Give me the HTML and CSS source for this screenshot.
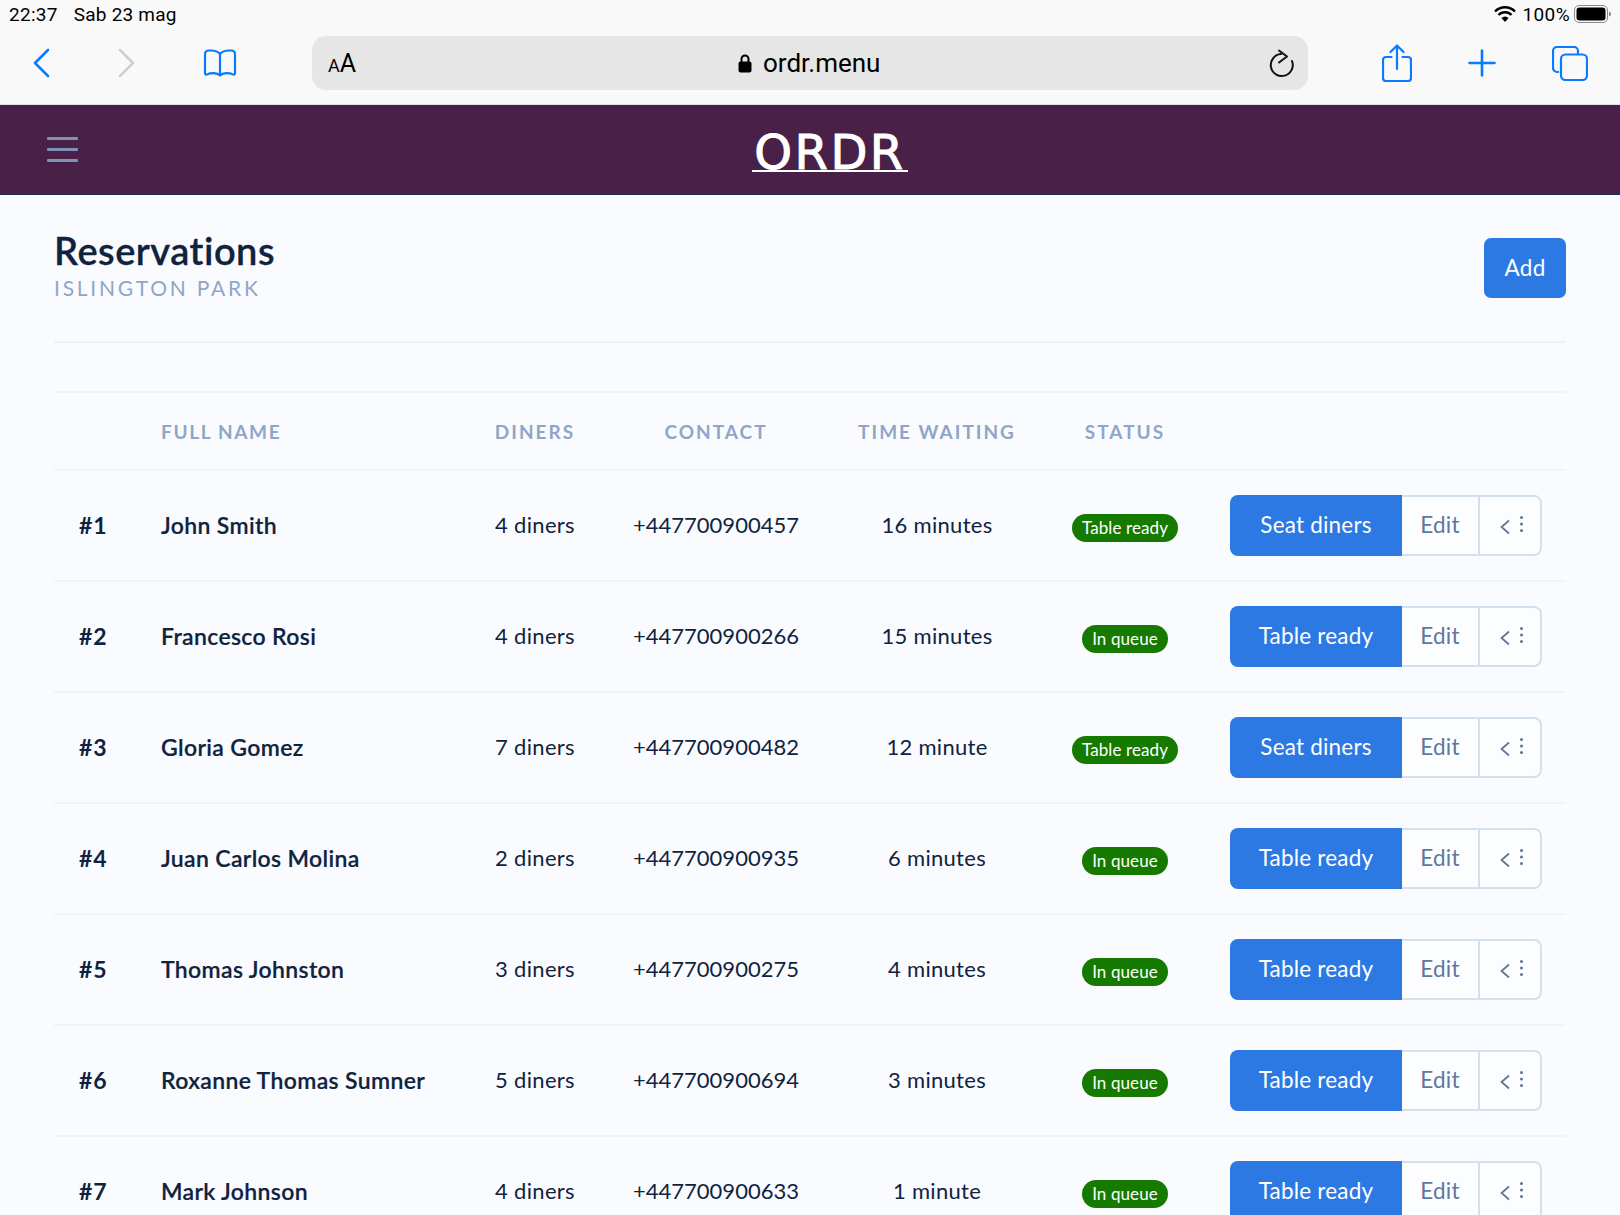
FILE: index.html
```html
<!DOCTYPE html>
<html lang="en">
<head>
<meta charset="utf-8">
<title>Reservations</title>
<link rel="stylesheet" href="styles.css">
</head>
<body>
<svg class="defs" width="0" height="0"><symbol id="more" viewBox="-1.500 0 30 22"><path d="M12.500 7.500l-7.500 6.500 7.500 6.500" fill="none" stroke="#5d7396" stroke-width="1.700"/><circle cx="25" cy="4.500" r="1.500" fill="#5d7396"/><circle cx="25" cy="11" r="1.500" fill="#5d7396"/><circle cx="25" cy="17.500" r="1.500" fill="#5d7396"/></symbol></svg>
<div class="chrome">
  <div class="status">
    <span class="clock">22:37</span><span class="date">Sab 23 mag</span>
    <span class="spring"></span>
    <svg class="wifi" width="22" height="16" viewBox="0 0 22 16"><path d="M1 5.500a14 14 0 0 1 20 0M4.500 9a9 9 0 0 1 13 0" fill="none" stroke="#000" stroke-width="2.400"/><path d="M11 16l-3.600-4a5.400 5.400 0 0 1 7.200 0z"/></svg>
    <span class="pct">100%</span>
    <svg class="batt" width="38" height="18" viewBox="0 0 38 18"><rect x=".5" y=".5" width="33" height="17" rx="4.500" fill="none" stroke="#8a8a8a"/><rect x="2.500" y="2.500" width="29" height="13" rx="3"/><path d="M35 6.500c1.500.4 2 1.300 2 2.500s-.5 2.100-2 2.500z" fill="#8a8a8a"/></svg>
  </div>
  <div class="toolbar">
    <svg class="ic back" width="18" height="30" viewBox="0 0 18 30"><path d="M16 2L3 15l13 13" fill="none" stroke="#0a7aff" stroke-width="2.600" stroke-linecap="round" stroke-linejoin="round"/></svg>
    <svg class="ic fwd" width="18" height="30" viewBox="0 0 18 30"><path d="M2 2l13 13L2 28" fill="none" stroke="#cfcfcf" stroke-width="2.600" stroke-linecap="round" stroke-linejoin="round"/></svg>
    <svg class="ic book" width="36" height="30" viewBox="0 0 36 30"><path d="M18 6C16 3.500 13 2.500 9 2.500H7C4.500 2.500 3 4 3 6.500V25c0 1.500 1 2 2.500 1.300C9 24.500 15 24.700 18 27.500c3-2.800 9-3 12.500-1.200 1.500.7 2.500.2 2.500-1.300V6.500C33 4 31.500 2.500 29 2.500h-2C23 2.500 20 3.500 18 6zM18 6v21" fill="none" stroke="#0a7aff" stroke-width="2.200" stroke-linejoin="round"/></svg>
    <div class="address">
      <span class="aa"><small>A</small>A</span>
      <span class="url"><svg class="lock" width="14" height="19" viewBox="0 0 14 19"><path d="M3.500 8V5a3.500 3.500 0 0 1 7 0v3" fill="none" stroke="#000" stroke-width="2"/><rect x="0.500" y="7.500" width="13" height="11" rx="2"/></svg>ordr.menu</span>
      <svg class="reload" width="26" height="30" viewBox="0 0 26 30"><path d="M12 6.100A11 11 0 1 0 23 13" fill="none" stroke="#111" stroke-width="2" stroke-linecap="round"/><path d="M10 2.500l8 6-8 6" fill="none" stroke="#111" stroke-width="2" stroke-linecap="round" stroke-linejoin="round"/></svg>
    </div>
    <svg class="ic share" width="30" height="38" viewBox="0 0 30 38"><path d="M9.500 13H4a3 3 0 0 0-3 3v18a3 3 0 0 0 3 3h22a3 3 0 0 0 3-3V16a3 3 0 0 0-3-3h-5.500M15 25V2M8.500 8L15 1.500 21.500 8" fill="none" stroke="#0a7aff" stroke-width="2.200" stroke-linecap="round" stroke-linejoin="round"/></svg>
    <svg class="ic plus" width="28" height="28" viewBox="0 0 28 28"><path d="M14 1.500v25M1.500 14h25" fill="none" stroke="#0a7aff" stroke-width="2.600" stroke-linecap="round"/></svg>
    <svg class="ic tabs" width="36" height="35" viewBox="0 0 36 35"><path d="M7 26H5a4 4 0 0 1-4-4V5a4 4 0 0 1 4-4h17a4 4 0 0 1 4 4v3" fill="none" stroke="#0a7aff" stroke-width="2.200"/><rect x="9" y="8.500" width="26" height="25.500" rx="4.500" fill="none" stroke="#0a7aff" stroke-width="2.200"/></svg>
  </div>
</div>
<header class="nav">
  <button class="burger" aria-label="Menu"><i></i><i></i><i></i></button>
  <span class="logo">ORDR</span>
</header>
<main class="page">
  <div class="head">
    <div>
      <h1>Reservations</h1>
      <p class="sub">ISLINGTON PARK</p>
    </div>
    <a class="add">Add</a>
  </div>
  <table class="res">
    <colgroup><col class="c1"><col class="c2"><col class="c3"><col class="c4"><col class="c5"><col class="c6"><col class="c7"></colgroup>
    <thead><tr><th></th><th class="l">FULL NAME</th><th>DINERS</th><th>CONTACT</th><th>TIME WAITING</th><th>STATUS</th><th></th></tr></thead>
    <tbody>
      <tr><td class="num">#1</td><td class="name">John Smith</td><td>4 diners</td><td class="tel">+447700900457</td><td>16 minutes</td><td><span class="badge">Table ready</span></td><td class="act"><div class="grp"><a class="pri">Seat diners</a><a class="edit">Edit</a><a class="more"><svg width="30" height="22"><use href="#more"/></svg></a></div></td></tr>
      <tr><td class="num">#2</td><td class="name">Francesco Rosi</td><td>4 diners</td><td class="tel">+447700900266</td><td>15 minutes</td><td><span class="badge">In queue</span></td><td class="act"><div class="grp"><a class="pri">Table ready</a><a class="edit">Edit</a><a class="more"><svg width="30" height="22"><use href="#more"/></svg></a></div></td></tr>
      <tr><td class="num">#3</td><td class="name">Gloria Gomez</td><td>7 diners</td><td class="tel">+447700900482</td><td>12 minute</td><td><span class="badge">Table ready</span></td><td class="act"><div class="grp"><a class="pri">Seat diners</a><a class="edit">Edit</a><a class="more"><svg width="30" height="22"><use href="#more"/></svg></a></div></td></tr>
      <tr><td class="num">#4</td><td class="name">Juan Carlos Molina</td><td>2 diners</td><td class="tel">+447700900935</td><td>6 minutes</td><td><span class="badge">In queue</span></td><td class="act"><div class="grp"><a class="pri">Table ready</a><a class="edit">Edit</a><a class="more"><svg width="30" height="22"><use href="#more"/></svg></a></div></td></tr>
      <tr><td class="num">#5</td><td class="name">Thomas Johnston</td><td>3 diners</td><td class="tel">+447700900275</td><td>4 minutes</td><td><span class="badge">In queue</span></td><td class="act"><div class="grp"><a class="pri">Table ready</a><a class="edit">Edit</a><a class="more"><svg width="30" height="22"><use href="#more"/></svg></a></div></td></tr>
      <tr><td class="num">#6</td><td class="name">Roxanne Thomas Sumner</td><td>5 diners</td><td class="tel">+447700900694</td><td>3 minutes</td><td><span class="badge">In queue</span></td><td class="act"><div class="grp"><a class="pri">Table ready</a><a class="edit">Edit</a><a class="more"><svg width="30" height="22"><use href="#more"/></svg></a></div></td></tr>
      <tr><td class="num">#7</td><td class="name">Mark Johnson</td><td>4 diners</td><td class="tel">+447700900633</td><td>1 minute</td><td><span class="badge">In queue</span></td><td class="act"><div class="grp"><a class="pri">Table ready</a><a class="edit">Edit</a><a class="more"><svg width="30" height="22"><use href="#more"/></svg></a></div></td></tr>
    </tbody>
  </table>
</main>
</body>
</html>
```

FILE: styles.css
```css
* { box-sizing: border-box; }
html, body { margin: 0; height: 1215px; overflow: hidden; }
body { background: #fafbfe; font-family: "Lato", sans-serif; color: #0f2340; font-variant-ligatures: none; }
.defs { position: absolute; }

.chrome { background: #f9f9f9; height: 105px; font-family: "Roboto", sans-serif; color: #000; border-bottom: 1px solid #e2e2e2; }
.status { height: 28px; padding: 0 8px 0 9px; display: flex; align-items: center; font-size: 19px; }
.clock { margin-right: 16px; letter-spacing: .3px; }
.date { letter-spacing: .2px; }
.spring { flex: 1; }
.wifi { margin-right: 6px; }
.pct { margin-right: 4px; letter-spacing: .4px; }
.toolbar { height: 60px; margin-top: 5px; display: flex; align-items: center; padding-left: 32px; }
.ic { flex: none; display: block; }
.fwd { margin-left: 68px; }
.book { margin-left: 66px; }
.address { margin-left: 74px; width: 996px; height: 54px; background: #e6e6e6; border-radius: 14px; display: flex; align-items: center; padding: 0 13px 0 16px; position: relative; }
.aa { font-size: 25px; width: 40px; }
.aa small { font-size: 18px; }
.url { position: absolute; left: 426px; font-size: 26px; display: flex; align-items: center; gap: 11px; }
.reload { margin-left: auto; }
.share { margin-left: 74px; }
.plus { margin-left: 56px; }
.tabs { margin-left: 56px; }

.nav { height: 90px; background: #482048; border-bottom: 1px solid #1f2b52; display: flex; align-items: center; justify-content: center; position: relative; }
.burger { position: absolute; left: 47px; top: 32px; width: 31px; background: none; border: 0; padding: 0; display: flex; flex-direction: column; gap: 8.500px; }
.burger i { display: block; height: 2.500px; background: #7f92b5; border-radius: 1px; }
.logo { color: #fff; font-family: "DejaVu Sans", sans-serif; font-size: 48px; font-weight: 400; line-height: 33px; letter-spacing: 2.500px; border-bottom: 2px solid #fff; margin: 8px 0 0 40px; height: 36px; width: 156px; text-align: center; white-space: nowrap; -webkit-text-stroke: 1px #fff; }

.page { padding: 0 54px; }
.head { height: 148px; padding: 44px 0; display: flex; justify-content: space-between; align-items: center; border-bottom: 2px solid #edf1f8; }
h1 { margin: -3px 0 0; font-size: 38px; line-height: 36px; font-weight: 600; letter-spacing: .5px; color: #0f2340; -webkit-text-stroke: .3px #0f2340; }
.sub { margin: 7px 0 0; font-size: 21px; line-height: 26px; letter-spacing: 2.750px; color: #8fa6c9; }
.add { display: flex; align-items: center; justify-content: center; width: 82px; height: 60px; background: #2c79e3; color: #fff; border-radius: 7px; font-size: 22.500px; padding-bottom: 2px; letter-spacing: .3px; }

.res { margin-top: 48px; width: 1512px; table-layout: fixed; border-collapse: collapse; font-size: 22px; }
.c1 { width: 83px; } .c2 { width: 334px; } .c3 { width: 128px; } .c4 { width: 234px; } .c5 { width: 208px; } .c6 { width: 168px; } .c7 { width: 357px; }
th { height: 78px; padding: 0; font-size: 19px; font-weight: 700; letter-spacing: 2px; color: #8fa6c9; border-top: 2px solid #f0f3f9; border-bottom: 2px solid #f0f3f9; }
th.l, td.name { text-align: left; padding-left: 24px; }
th.l { letter-spacing: 1.650px; }
td { height: 111px; padding: 0 0 2px; text-align: center; border-bottom: 2px solid #f0f3f9; white-space: nowrap; letter-spacing: .3px; }
td.tel { letter-spacing: 0; }
td.num { text-align: left; padding-left: 25px; font-weight: 700; font-size: 23px; letter-spacing: 1px; }
td.name { font-weight: 600; font-size: 23px; letter-spacing: .35px; -webkit-text-stroke: .2px #0f2340; }
.badge { display: inline-block; height: 28px; line-height: 27px; padding: 0 10px; margin-top: 7px; border-radius: 14px; background: #167a00; color: #fff; font-size: 17px; letter-spacing: .1px; vertical-align: middle; }
.act { padding: 0 24px 0 0; }
.grp { display: flex; justify-content: flex-end; height: 61px; font-size: 22.500px; letter-spacing: .2px; }
.grp a { display: flex; align-items: center; justify-content: center; height: 61px; padding-bottom: 3px; }
.pri { width: 172px; background: #2c79e3; color: #fff; border-radius: 8px 0 0 8px; }
.edit { width: 78px; color: #60789c; background: #fcfdff; border: 2px solid #d5e0ef; border-left: 0; }
.more { width: 62px; background: #fcfdff; border: 2px solid #d5e0ef; border-left: 0; border-radius: 0 8px 8px 0; }
```
